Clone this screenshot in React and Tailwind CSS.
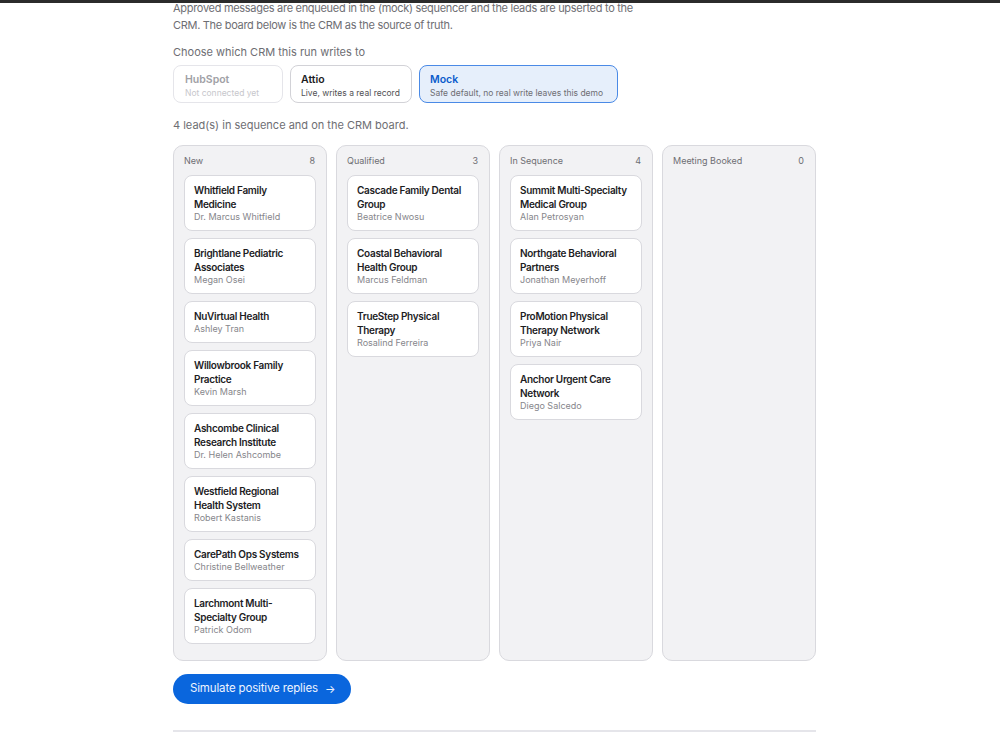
import React from "react";

const columns = [
  {
    title: "New",
    leads: [
      ["Whitfield Family Medicine", "Dr. Marcus Whitfield"],
      ["Brightlane Pediatric Associates", "Megan Osei"],
      ["NuVirtual Health", "Ashley Tran"],
      ["Willowbrook Family Practice", "Kevin Marsh"],
      ["Ashcombe Clinical Research Institute", "Dr. Helen Ashcombe"],
      ["Westfield Regional Health System", "Robert Kastanis"],
      ["CarePath Ops Systems", "Christine Bellweather"],
      ["Larchmont Multi-Specialty Group", "Patrick Odom"],
    ],
    count: 8,
  },
  {
    title: "Qualified",
    leads: [
      ["Cascade Family Dental Group", "Beatrice Nwosu"],
      ["Coastal Behavioral Health Group", "Marcus Feldman"],
      ["TrueStep Physical Therapy", "Rosalind Ferreira"],
    ],
    count: 3,
  },
  {
    title: "In Sequence",
    leads: [
      ["Summit Multi-Specialty Medical Group", "Alan Petrosyan"],
      ["Northgate Behavioral Partners", "Jonathan Meyerhoff"],
      ["ProMotion Physical Therapy Network", "Priya Nair"],
      ["Anchor Urgent Care Network", "Diego Salcedo"],
    ],
    count: 4,
  },
  { title: "Meeting Booked", leads: [], count: 0 },
];

function LeadCard({ name, person }) {
  return (
    <div className="bg-white border border-[#d9d9de] rounded-[8px] px-[9px] pt-[7px] pb-[7px]">
      <div className="text-[10px] leading-[14px] font-semibold tracking-[-0.3px] text-[#1d1d1f]">{name}</div>
      <div className="text-[9px] leading-[12px] text-[#86868b]">{person}</div>
    </div>
  );
}

export default function App() {
  return (
    <div className="min-h-[750px] bg-white" style={{ fontFamily: "Inter, 'Liberation Sans', sans-serif" }}>
      <div className="fixed top-0 left-0 right-0 h-[3px] bg-[#2b2b2b]" />
      <div className="w-[643px] ml-[173px]">
        <p className="text-[11px] leading-[17px] tracking-[-0.3px] text-[#6e6e73]">
          Approved messages are enqueued in the (mock) sequencer and the leads are upserted to the
          <br />
          CRM. The board below is the CRM as the source of truth.
        </p>
        <div className="mt-[11px] text-[11px] leading-[14px] text-[#6e6e73]">Choose which CRM this run writes to</div>
        <div className="mt-[6px] flex gap-[7px]">
          <div className="w-[110px] h-[38px] rounded-[8px] border border-[#e5e5ea] px-[11px] pt-[7px] whitespace-nowrap">
            <div className="text-[10.5px] leading-[14px] font-semibold text-[#a1a1a6]">HubSpot</div>
            <div className="text-[8.5px] leading-[12px] text-[#c7c7cc]">Not connected yet</div>
          </div>
          <div className="w-[122px] h-[38px] rounded-[8px] border border-[#d2d2d7] px-[10px] pt-[7px] whitespace-nowrap">
            <div className="text-[10.5px] leading-[14px] font-semibold text-[#1d1d1f]">Attio</div>
            <div className="text-[8.5px] leading-[12px] text-[#515154]">Live, writes a real record</div>
          </div>
          <div className="w-[199px] h-[38px] rounded-[8px] border border-[#4a8ae6] bg-[#e6effb] px-[10px] pt-[7px] whitespace-nowrap">
            <div className="text-[10.5px] leading-[14px] font-semibold text-[#0a5ccc]">Mock</div>
            <div className="text-[8.5px] leading-[12px] text-[#6e6e73]">Safe default, no real write leaves this demo</div>
          </div>
        </div>
        <div className="mt-[15px] text-[11px] leading-[14px] text-[#6e6e73]">4 lead(s) in sequence and on the CRM board.</div>
        <div className="mt-[13px] grid grid-cols-4 gap-[9px]">
          {columns.map((col) => (
            <div key={col.title} className="h-[516px] bg-[#f2f2f4] border border-[#d9d9de] rounded-[10px] px-[10px] pt-[8px]">
              <div className="flex justify-between text-[9px] leading-[12px] text-[#6e6e73] pt-[1px]">
                <span>{col.title}</span>
                <span className="pr-[1px]">{col.count}</span>
              </div>
              <div className="mt-[8px] flex flex-col gap-[7px]">
                {col.leads.map(([n, p]) => (
                  <LeadCard key={n} name={n} person={p} />
                ))}
              </div>
            </div>
          ))}
        </div>
        <button className="mt-[13px] h-[30px] w-[178px] rounded-full bg-[#0a66dd] text-[#eef4ff] text-[11.5px] tracking-[-0.15px] flex items-center pl-[17px] gap-[7px]">
          Simulate positive replies
          <span className="text-[11px]">→</span>
        </button>
        <div className="mt-[26px] h-[2px] bg-[#e5e5ea]" />
      </div>
    </div>
  );
}
